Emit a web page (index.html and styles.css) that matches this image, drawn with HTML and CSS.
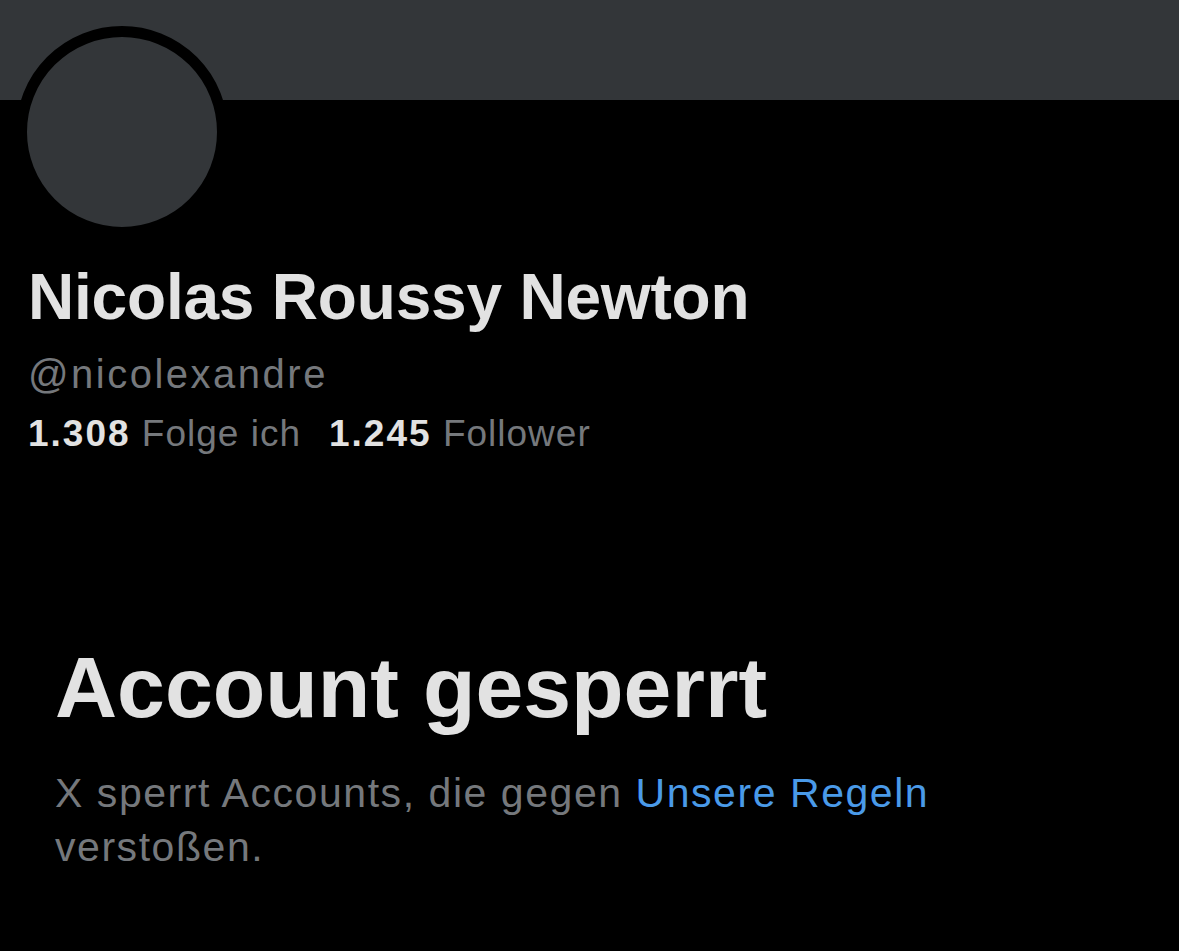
FILE: index.html
```html
<!DOCTYPE html>
<html lang="de">
<head>
<meta charset="utf-8">
<title>Account gesperrt</title>
<link rel="stylesheet" href="styles.css">
</head>
<body>
<div class="banner"></div>
<div class="profile">
  <div class="avatar-ring"><div class="avatar"></div></div>
  <h1 class="name">Nicolas Roussy Newton</h1>
  <div class="handle">@nicolexandre</div>
  <div class="stats">
    <span class="stat"><b>1.308</b> Folge ich</span>
    <span class="stat"><b>1.245</b> Follower</span>
  </div>
</div>
<div class="suspended">
  <h2 class="title">Account gesperrt</h2>
  <p class="desc">X sperrt Accounts, die gegen <a class="link" href="#">Unsere Regeln</a> verstoßen.</p>
</div>
</body>
</html>
```
FILE: styles.css
```css
html, body {
  margin: 0;
  padding: 0;
  background: #000;
  height: 100%;
}
body {
  font-family: "Liberation Sans", Arial, sans-serif;
  color: #e2e2e2;
  overflow: hidden;
}
.banner {
  height: 100px;
  background: #333639;
}
.profile {
  padding-left: 16px;
}
.avatar-ring {
  width: 190px;
  height: 190px;
  margin-top: -74px;
  border: 11px solid #000;
  border-radius: 50%;
  background: #333639;
}
.avatar {
  width: 100%;
  height: 100%;
  border-radius: 50%;
}
.name {
  margin: 21px 0 0 12px;
  font-size: 64px;
  line-height: 76px;
  font-weight: 700;
  letter-spacing: -0.2px;
  color: #e2e2e2;
}
.handle {
  margin: 9px 0 0 12px;
  font-size: 40px;
  line-height: 60px;
  letter-spacing: 2.5px;
  color: #75787c;
}
.stats {
  margin-left: 12px;
  display: flex;
  gap: 28px;
  font-size: 37px;
  line-height: 60px;
  letter-spacing: 1px;
  color: #75787c;
}
.stat b {
  color: #e2e2e2;
  font-weight: 700;
  letter-spacing: 2px;
}
.suspended {
  padding: 0 0 0 55px;
  margin-top: 173px;
}
.title {
  margin: 0;
  font-size: 86px;
  line-height: 100px;
  font-weight: 700;
  letter-spacing: 0;
  color: #e2e2e2;
}
.desc {
  margin: 29px 0 0 0;
  font-size: 41px;
  line-height: 54px;
  letter-spacing: 1.55px;
  color: #75787c;
  max-width: 900px;
}
.link {
  color: #4a9ae8;
  text-decoration: none;
}
```
